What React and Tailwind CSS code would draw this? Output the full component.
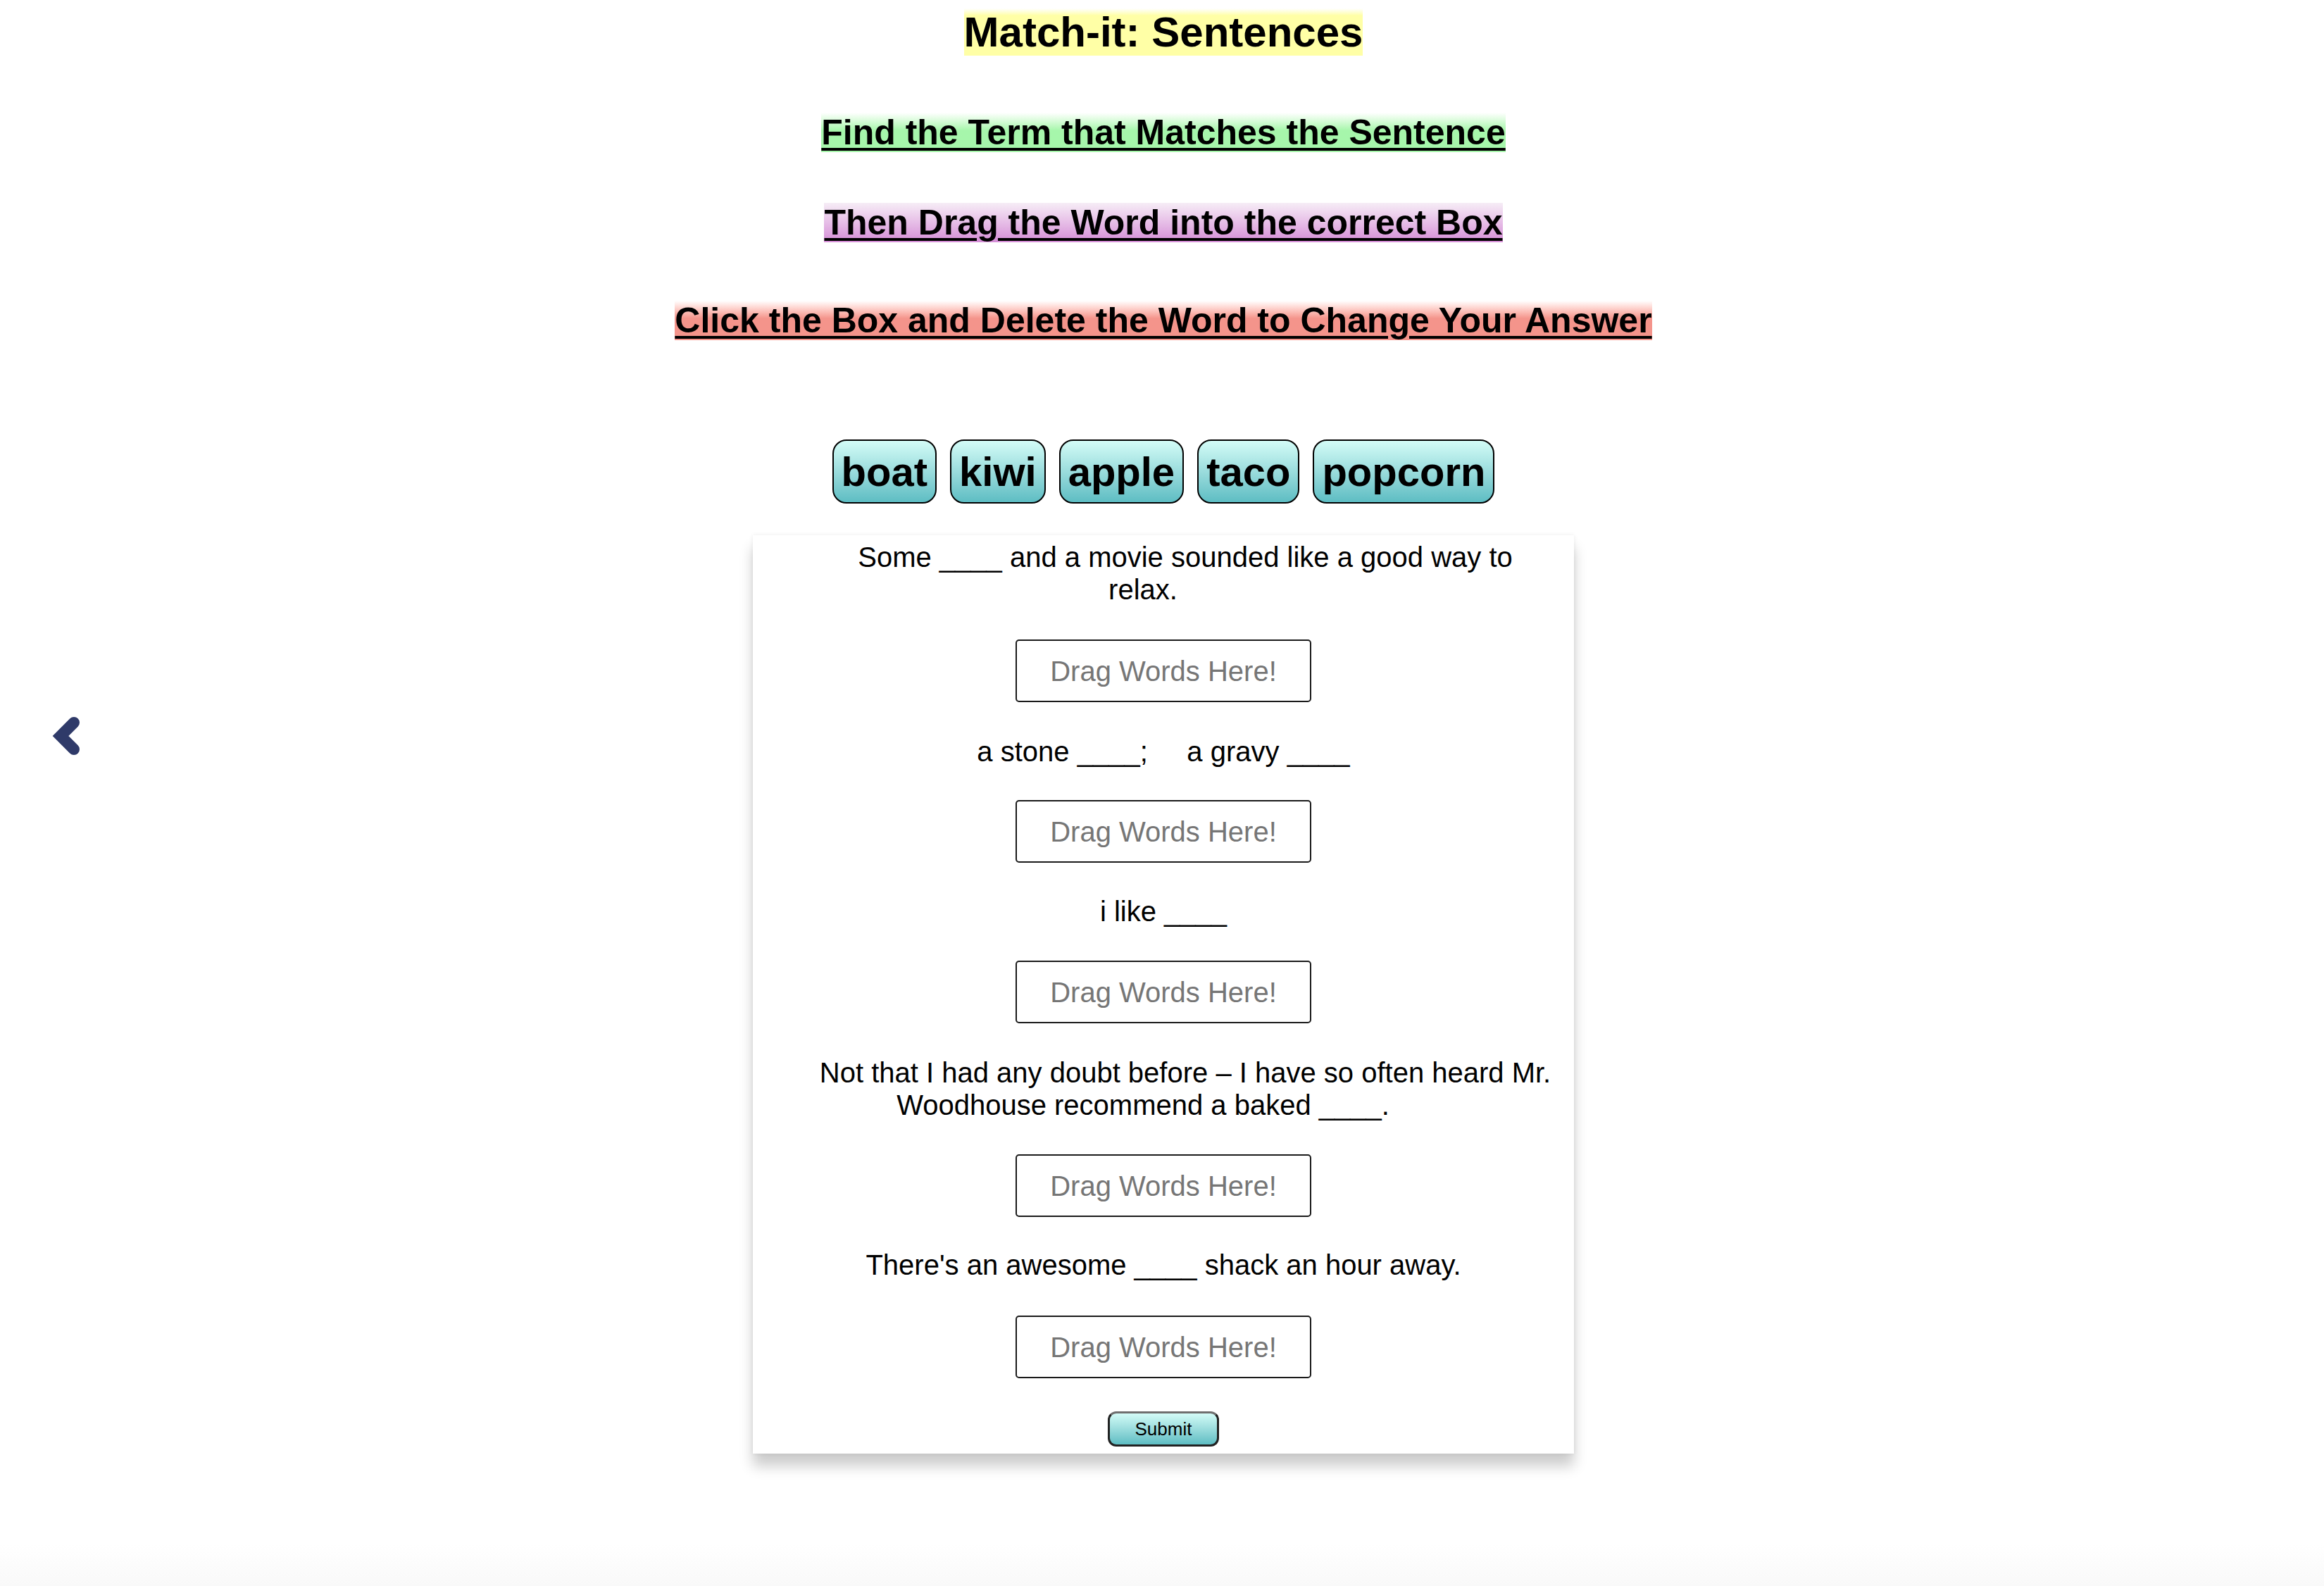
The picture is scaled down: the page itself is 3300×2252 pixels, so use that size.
import React from "react";

const tiles = ["boat", "kiwi", "apple", "taco", "popcorn"];

function DropBox() {
  return (
    <div className="w-[420px] h-[89px] border-2 border-[#1a1a1a] rounded-[5px] flex items-center justify-center text-[40px] leading-[46px] text-[#767676] bg-white">
      Drag Words Here!
    </div>
  );
}

export default function App() {
  return (
    <div
      className="relative min-h-[2252px] flex flex-col bg-white text-black pl-[4px]"
      style={{ fontFamily: '"Liberation Sans", Arial, sans-serif' }}
    >
      {/* left chevron */}
      <svg
        className="absolute left-[70px] top-[1012px]"
        width="50"
        height="66"
        viewBox="0 0 50 66"
        fill="none"
      >
        <polyline
          points="35,14 16,33 35,52"
          stroke="#2f3a69"
          strokeWidth="16"
          strokeLinecap="round"
          strokeLinejoin="miter"
        />
      </svg>

      <div className="mt-[11px] text-center text-[60px] leading-[69px] font-bold">
        <span className="bg-linear-to-b from-white from-0% to-[#ffffa6] to-15%">
          Match-it: Sentences
        </span>
      </div>

      <div className="mt-[79px] text-center text-[50px] leading-[58px] font-bold underline decoration-[4px] underline-offset-[5px]">
        <span className="bg-linear-to-b from-white from-0% to-[#a6f6ab] to-45%">
          Find the Term that Matches the Sentence
        </span>
      </div>

      <div className="mt-[70px] text-center text-[50px] leading-[58px] font-bold underline decoration-[4px] underline-offset-[5px]">
        <span className="bg-linear-to-b from-[#f6edf6] from-0% to-[#d48dd6] to-100%">
          Then Drag the Word into the correct Box
        </span>
      </div>

      <div className="mt-[81px] text-center text-[50px] leading-[58px] font-bold underline decoration-[4px] underline-offset-[5px]">
        <span className="bg-linear-to-b from-white from-0% to-[#f4948b] to-45%">
          Click the Box and Delete the Word to Change Your Answer
        </span>
      </div>

      <div className="mt-[140px] flex justify-center gap-[19px]">
        {tiles.map((t) => (
          <div
            key={t}
            className="border-2 border-black rounded-[20px] px-[11px] py-[10px] text-[58px] leading-[67px] font-bold bg-linear-to-b from-[#d3fcf7] to-[#5dbdc3]"
          >
            {t}
          </div>
        ))}
      </div>

      <div className="mt-[45px] mx-auto w-[1166px] bg-white flex flex-col items-center pt-[8px] pb-[10px] text-[40px] leading-[46px] shadow-[0_18px_18px_rgba(0,0,0,0.2),0_0_6px_rgba(0,0,0,0.08)]">
        <div className="ml-[62px]">Some ____ and a movie sounded like a good way to</div>
        <div className="mr-[58px]">relax.</div>
        <div className="mt-[48px]">
          <DropBox />
        </div>

        <div className="mt-[47px]">a stone ____;{"\u00a0\u00a0\u00a0\u00a0"} a gravy ____</div>
        <div className="mt-[46px]">
          <DropBox />
        </div>

        <div className="mt-[46px]">i like ____</div>
        <div className="mt-[47px]">
          <DropBox />
        </div>

        <div className="mt-[47px] ml-[62px]">
          Not that I had any doubt before – I have so often heard Mr.
        </div>
        <div className="mr-[58px]">Woodhouse recommend a baked ____.</div>
        <div className="mt-[47px]">
          <DropBox />
        </div>

        <div className="mt-[45px]">There's an awesome ____ shack an hour away.</div>
        <div className="mt-[49px]">
          <DropBox />
        </div>

        <button className="mt-[47px] w-[158px] h-[50px] rounded-[12px] border-[3px] border-[#222222] border-t-[#6f6f6f] bg-linear-to-b from-[#d3fcf7] to-[#5dbdc3] text-[26px] leading-[30px] text-black flex items-center justify-center">
          Submit
        </button>
      </div>

      <div className="mt-auto -ml-[4px] h-[60px] bg-linear-to-b from-white to-[#f9f9f9]" />
    </div>
  );
}
